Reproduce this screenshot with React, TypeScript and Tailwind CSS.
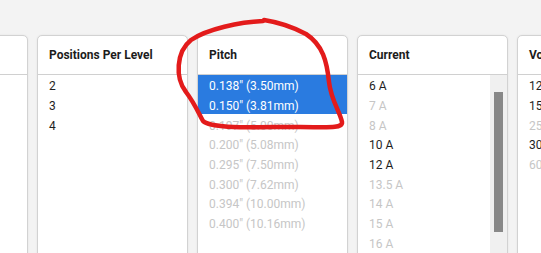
import React from "react";

type Item = { label: string; on?: boolean; sel?: boolean };

const font = { fontFamily: "Roboto, 'Liberation Sans', sans-serif" };

function Panel({
  title,
  items,
  scroll,
}: {
  title: string;
  items: Item[];
  scroll?: boolean;
}) {
  return (
    <div className="w-[151px] shrink-0 h-[240px] bg-white border border-[#d2d2d2] rounded-t-[5px] flex flex-col overflow-hidden shadow-[0_0_2px_rgba(0,0,0,0.08)]">
      <div className="h-[39px] shrink-0 border-b border-[#d0d0d0] flex items-center pl-[11px] text-[12px] font-bold text-[#1c1c1c] whitespace-nowrap">
        {title}
      </div>
      <div className="flex flex-1 min-h-0">
        <div className="flex-1 flex flex-col">
          {items.map((it, i) => (
            <div
              key={i}
              className={
                "h-[19.7px] shrink-0 flex items-center pl-[11px] pt-[3px] text-[12px] whitespace-nowrap " +
                (it.sel
                  ? "bg-[#2a7be0] text-white"
                  : it.on
                  ? "text-[#1e1e1e]"
                  : "text-[#c6c6c6]")
              }
            >
              {it.label}
            </div>
          ))}
        </div>
        {scroll && (
          <div className="w-[17px] shrink-0 bg-[#f0f0f0] pt-[17px] px-[4px]">
            <div className="h-[140px] bg-[#888888]" />
          </div>
        )}
      </div>
    </div>
  );
}

export default function App() {
  return (
    <div
      className="relative w-[541px] h-[253px] overflow-hidden bg-[#f3f3f3]"
      style={font}
    >
      <div className="flex gap-[9px] ml-[-123px] pt-[35px]">
        <Panel title="" items={[]} />
        <Panel
          title="Positions Per Level"
          items={[
            { label: "2", on: true },
            { label: "3", on: true },
            { label: "4", on: true },
          ]}
        />
        <Panel
          title="Pitch"
          items={[
            { label: '0.138" (3.50mm)', sel: true },
            { label: '0.150" (3.81mm)', sel: true },
            { label: '0.197" (5.00mm)' },
            { label: '0.200" (5.08mm)' },
            { label: '0.295" (7.50mm)' },
            { label: '0.300" (7.62mm)' },
            { label: '0.394" (10.00mm)' },
            { label: '0.400" (10.16mm)' },
          ]}
        />
        <Panel
          title="Current"
          scroll
          items={[
            { label: "6 A", on: true },
            { label: "7 A" },
            { label: "8 A" },
            { label: "10 A", on: true },
            { label: "12 A", on: true },
            { label: "13.5 A" },
            { label: "14 A" },
            { label: "15 A" },
            { label: "16 A" },
          ]}
        />
        <Panel
          title="Voltage"
          items={[
            { label: "125 V", on: true },
            { label: "150 V", on: true },
            { label: "250 V" },
            { label: "300 V", on: true },
            { label: "600 V" },
          ]}
        />
      </div>
      <svg
        className="absolute left-0 top-0 pointer-events-none"
        width="541"
        height="253"
        viewBox="0 0 541 253"
      >
        <path
          d="M 263 21 C 240 22, 207 29, 191 40 C 176 52, 175 78, 186 92 C 195 104, 199 114, 203 121 C 212 129, 250 127, 300 127 C 325 127, 343 129, 342 122 C 340 112, 331 100, 329 82 C 327 62, 323 45, 306 34 C 291 26, 277 22, 264 20"
          fill="none"
          stroke="#e31b1b"
          strokeWidth="4.5"
          strokeLinecap="round"
          strokeLinejoin="round"
        />
      </svg>
    </div>
  );
}
